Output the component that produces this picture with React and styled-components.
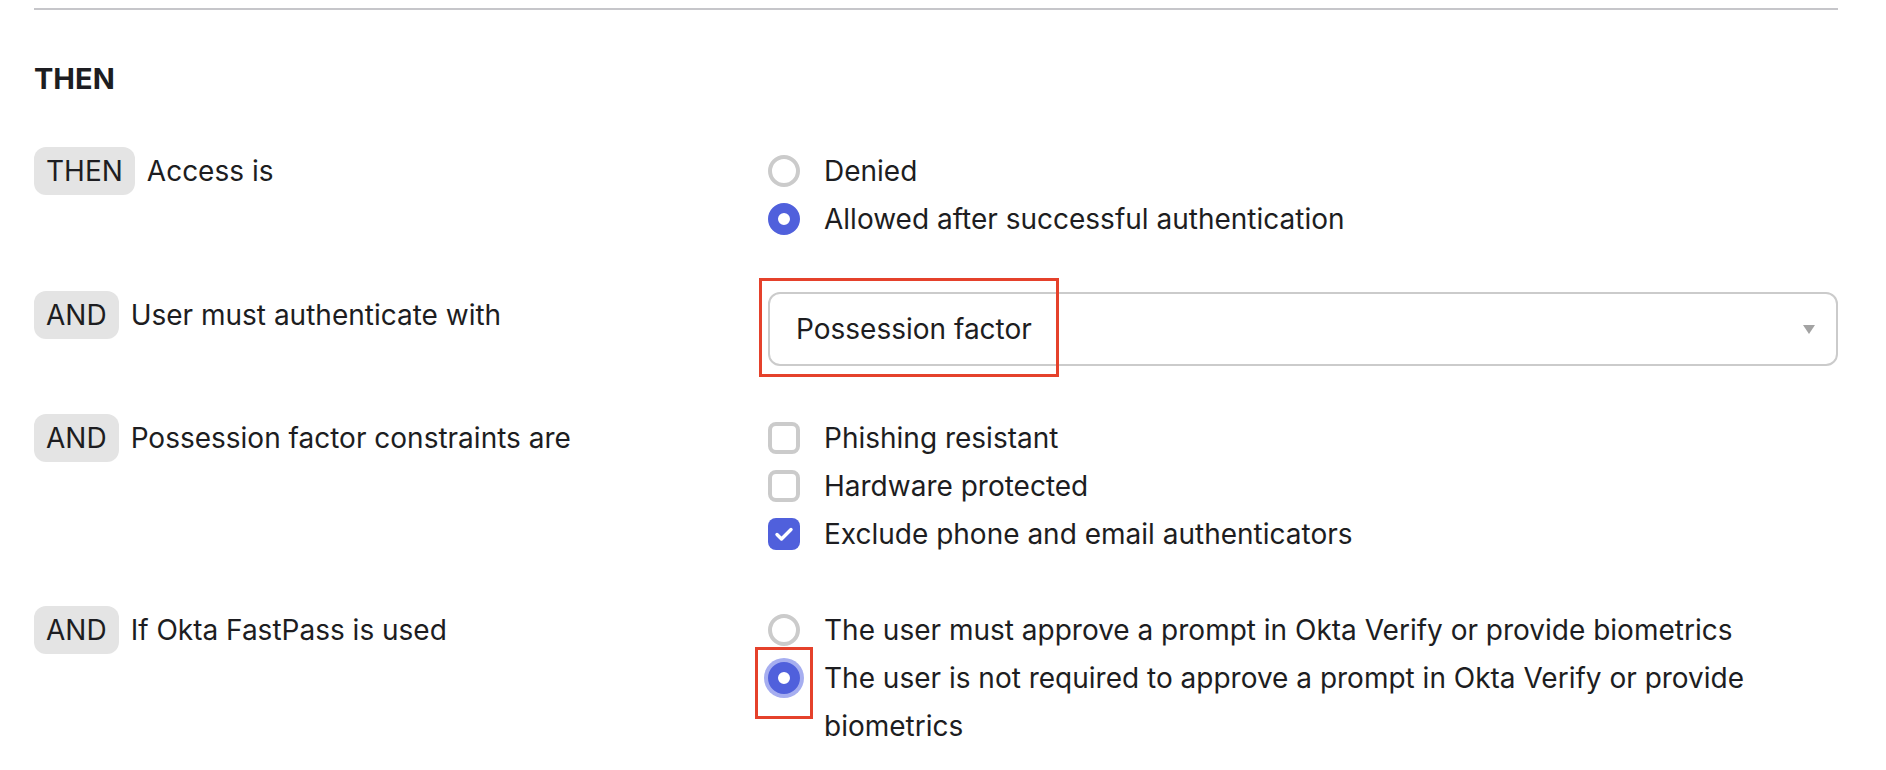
import React from "react";
import styled, { createGlobalStyle } from "styled-components";

const GlobalStyle = createGlobalStyle`
  body {
    margin: 0;
    background: #ffffff;
    font-family: Inter, "Noto Sans", sans-serif;
    color: #1d1d21;
  }
`;

const Page = styled.div`
  width: 1804px;
  padding: 8px 0 0 34px;
`;

const Divider = styled.hr`
  margin: 0;
  border: 0;
  height: 2px;
  background: #c6c6ca;
`;

const Heading = styled.h2`
  margin: 45px 0 44px;
  font-size: 29px;
  line-height: 48px;
  font-weight: 700;
`;

const Rules = styled.div`
  display: flex;
  flex-direction: column;
  gap: 48px;
`;

const Row = styled.div`
  display: grid;
  grid-template-columns: 734px 1fr;
`;

const Condition = styled.div`
  display: flex;
  align-items: center;
  gap: 12px;
  height: 48px;
  font-size: 28px;
`;

const Pill = styled.span`
  display: inline-flex;
  align-items: center;
  height: 48px;
  padding: 0 12px;
  border-radius: 12px;
  background: #e4e4e4;
  font-size: 28px;
`;

const Options = styled.div`
  display: flex;
  flex-direction: column;
`;

const Option = styled.label`
  display: flex;
  align-items: flex-start;
  gap: 24px;
  font-size: 28px;
  line-height: 48px;
`;

const ControlSlot = styled.span`
  position: relative;
  flex: none;
  width: 32px;
  height: 32px;
  margin-top: 8px;
`;

const Radio = styled.span`
  display: block;
  box-sizing: border-box;
  width: 32px;
  height: 32px;
  border-radius: 50%;
  border: ${(p) => (p.$checked ? "10px solid #5060dc" : "4px solid #cbcbcb")};
  background: #fff;
  box-shadow: ${(p) => (p.$focused ? "0 0 0 4px #a6aef0" : "none")};
`;

const Box = styled.span`
  display: flex;
  align-items: center;
  justify-content: center;
  box-sizing: border-box;
  width: 32px;
  height: 32px;
  border-radius: 8px;
  border: ${(p) => (p.$checked ? "none" : "4px solid #cbcbcb")};
  background: ${(p) => (p.$checked ? "#5060dc" : "#fff")};
`;

const Highlight = styled.span`
  position: absolute;
  box-sizing: border-box;
  border: 3px solid #e5412b;
  pointer-events: none;
`;

const SelectWrap = styled.div`
  position: relative;
`;

const Select = styled.div`
  display: flex;
  align-items: center;
  justify-content: space-between;
  box-sizing: border-box;
  height: 74px;
  margin-top: 1px;
  padding: 0 21px 0 26px;
  border: 2px solid #cbcbcb;
  border-radius: 12px;
  font-size: 28px;
`;

const Caret = styled.span`
  width: 0;
  height: 0;
  border-left: 6px solid transparent;
  border-right: 6px solid transparent;
  border-top: 9px solid #a3a3a3;
`;

const Check = () => (
  <svg width="20" height="16" viewBox="0 0 20 16" fill="none">
    <path d="M3 8.5l4.5 4.5L17 3.5" stroke="#fff" strokeWidth="3.4" strokeLinecap="round" strokeLinejoin="round" />
  </svg>
);

const RadioOption = ({ checked, focused, children }) => (
  <Option>
    <ControlSlot>
      <Radio $checked={checked} $focused={focused} />
      {focused && <Highlight style={{ left: -13, top: -15, width: 58, height: 72 }} />}
    </ControlSlot>
    <span>{children}</span>
  </Option>
);

const CheckOption = ({ checked, children }) => (
  <Option>
    <ControlSlot>
      <Box $checked={checked}>{checked && <Check />}</Box>
    </ControlSlot>
    <span>{children}</span>
  </Option>
);

export default function App() {
  return (
    <>
      <GlobalStyle />
      <Page>
        <Divider />
        <Heading>THEN</Heading>
        <Rules>
          <Row>
            <Condition>
              <Pill>THEN</Pill>
              Access is
            </Condition>
            <Options>
              <RadioOption>Denied</RadioOption>
              <RadioOption checked>Allowed after successful authentication</RadioOption>
            </Options>
          </Row>

          <Row>
            <Condition>
              <Pill>AND</Pill>
              User must authenticate with
            </Condition>
            <SelectWrap>
              <Select>
                Possession factor
                <Caret />
              </Select>
              <Highlight style={{ left: -9, top: -13, width: 300, height: 99 }} />
            </SelectWrap>
          </Row>

          <Row>
            <Condition>
              <Pill>AND</Pill>
              Possession factor constraints are
            </Condition>
            <Options>
              <CheckOption>Phishing resistant</CheckOption>
              <CheckOption>Hardware protected</CheckOption>
              <CheckOption checked>Exclude phone and email authenticators</CheckOption>
            </Options>
          </Row>

          <Row>
            <Condition>
              <Pill>AND</Pill>
              If Okta FastPass is used
            </Condition>
            <Options>
              <RadioOption>
                The user must approve a prompt in Okta Verify or provide biometrics
              </RadioOption>
              <RadioOption checked focused>
                The user is not required to approve a prompt in Okta Verify or provide biometrics
              </RadioOption>
            </Options>
          </Row>
        </Rules>
      </Page>
    </>
  );
}
